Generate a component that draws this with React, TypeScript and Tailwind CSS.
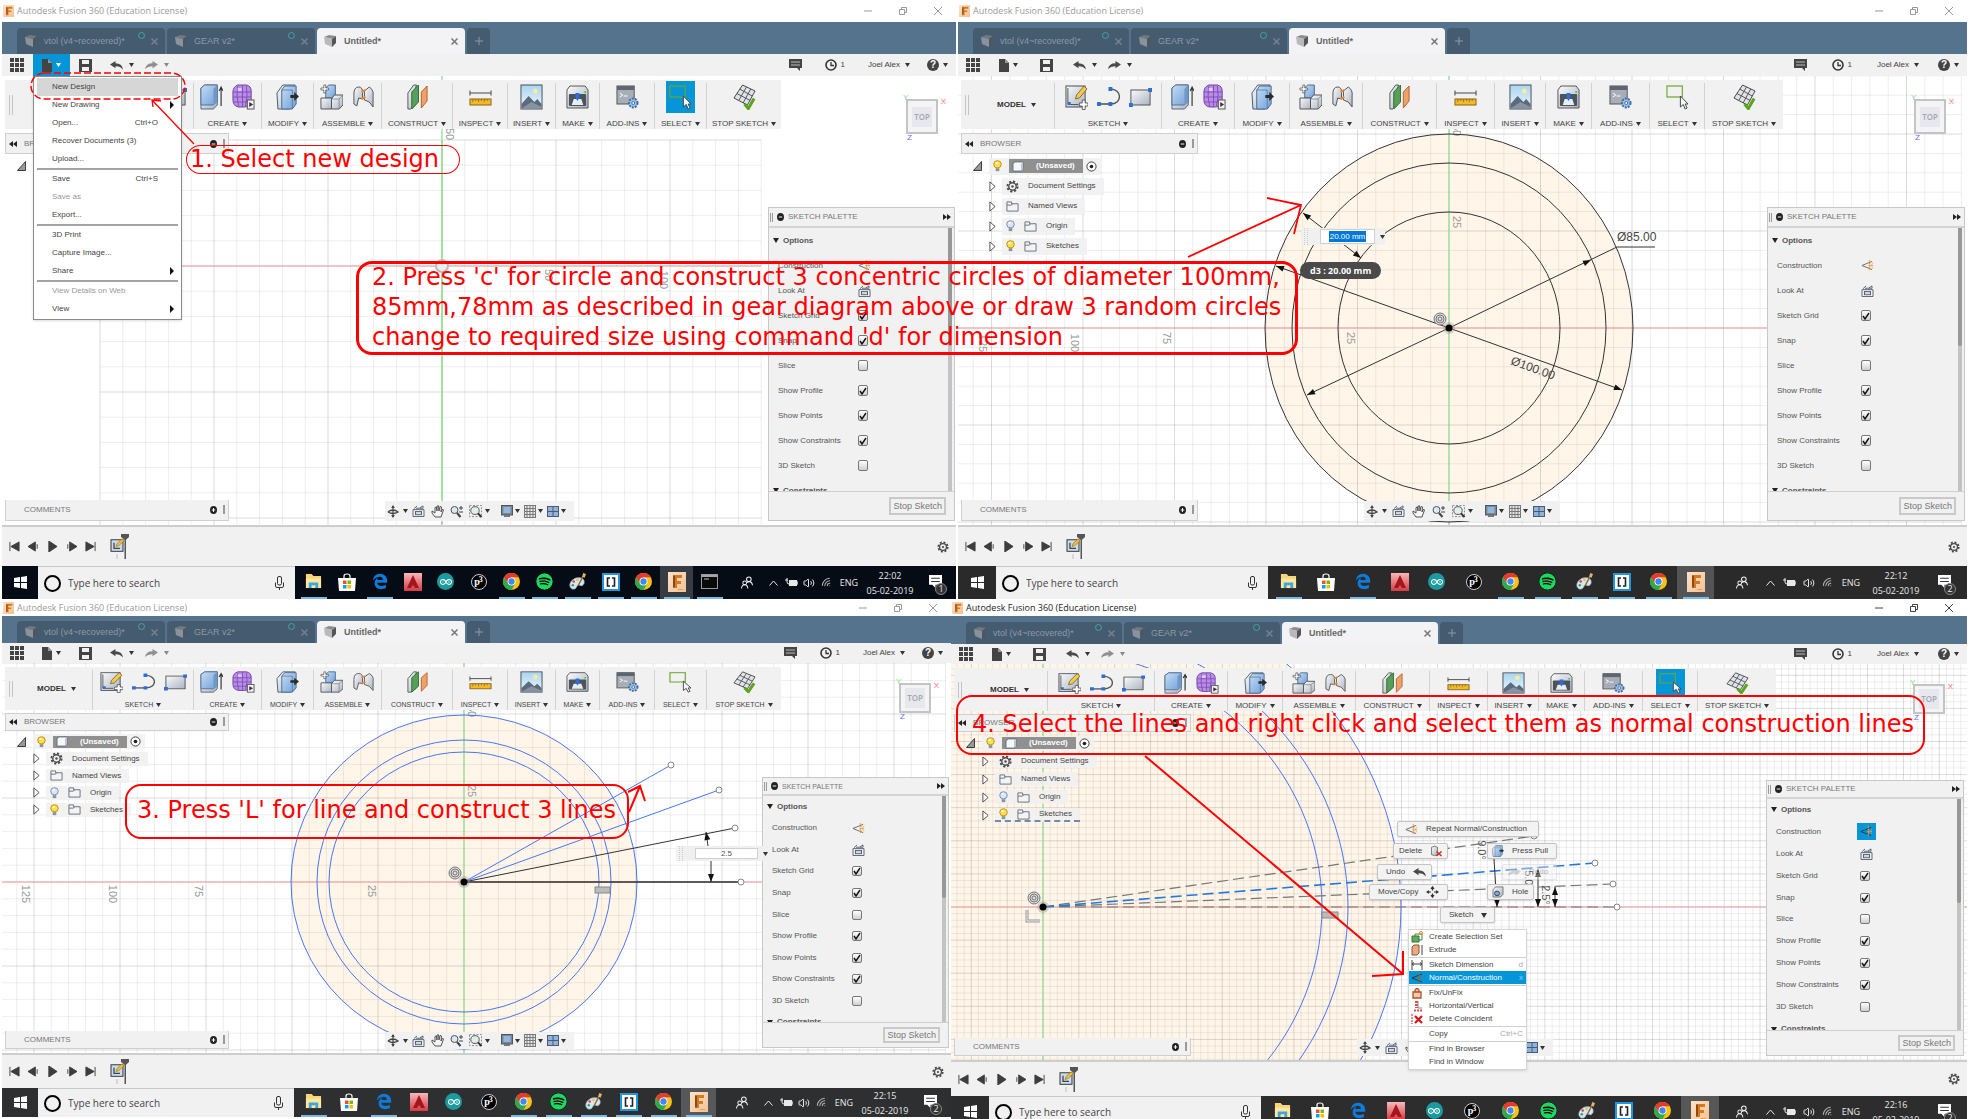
import type { ReactNode } from "react";
import { FaEdgeLegacy, FaSpotify } from "react-icons/fa";
import { SiArduino } from "react-icons/si";
import { LuWifi, LuVolume2 } from "react-icons/lu";

/* ---------- drawing helpers ---------- */

function Pic({ box, className, children }: { box: string; className: string; children: ReactNode }) {
  return (
    <svg viewBox={box} preserveAspectRatio="none" className={`block shrink-0 ${className}`} fill="none" aria-hidden="true">
      {children}
    </svg>
  );
}

function Caret({ light, faint }: { light?: boolean; faint?: boolean }) {
  return (
    <Pic box="0 0 5 4" className="h-1 w-[5px]">
      <path d="M0 0H5L2.500 4Z" fill={light ? "#fff" : faint ? "#888" : "#333"} />
    </Pic>
  );
}

function SharedDefs() {
  return (
    <svg className="absolute h-0 w-0" aria-hidden="true">
      <defs>
        <linearGradient id="steel" x1="0" y1="0" x2="1" y2="1">
          <stop offset="0" stopColor="#fafbfc" />
          <stop offset="1" stopColor="#aab4c2" />
        </linearGradient>
        <linearGradient id="blue" x1="0" y1="0" x2="1" y2="1">
          <stop offset="0" stopColor="#c6ddf6" />
          <stop offset="1" stopColor="#6fa0d8" />
        </linearGradient>
        <linearGradient id="sky" x1="0" y1="0" x2="0" y2="1">
          <stop offset="0" stopColor="#a8d4f0" />
          <stop offset="1" stopColor="#eef7fb" />
        </linearGradient>
        <linearGradient id="acad" x1="0" y1="0" x2="0" y2="1">
          <stop offset="0" stopColor="#f6b9b9" />
          <stop offset="1" stopColor="#d63a42" />
        </linearGradient>
        <linearGradient id="fus" x1="0" y1="0" x2="1" y2="1">
          <stop offset="0" stopColor="#fbe3cb" />
          <stop offset="1" stopColor="#f3c193" />
        </linearGradient>
      </defs>
    </svg>
  );
}

/* ---------- ribbon icons ---------- */

const toolPics: Record<string, ReactNode> = {
  sketch: (
    <>
      <rect x="1" y="2" width="20" height="21" fill="url(#steel)" stroke="#4a4f57" />
      <path d="M3 4V20.500H14" stroke="#555" />
      <rect x="3" y="18" width="3" height="3" fill="#2d6fd2" />
      <path d="M11 15 12 11 20 2 23 5 15 14Z" fill="#f7c948" stroke="#6a5420" strokeWidth=".8" />
      <path d="M18 16h3v3h3v3h-3v3.500h-3V22h-3v-3h3Z" fill="#fff" stroke="#444" strokeWidth=".8" />
    </>
  ),
  line: (
    <>
      <path d="M2 20H14" stroke="#555" strokeWidth="1.600" />
      <path d="M14 20C27 20 26 5 14 5" stroke="#555" strokeWidth="1.400" />
      <path d="M0 18h4v4H0ZM12 18h4v4h-4ZM12 3h4v4h-4Z" fill="#2d6fd2" />
    </>
  ),
  rect: (
    <>
      <rect x="2" y="6" width="20" height="15" fill="url(#steel)" stroke="#555" />
      <path d="M20 4h4v4h-4ZM0 19h4v4H0Z" fill="#2d6fd2" />
    </>
  ),
  extrude: (
    <>
      <path d="M1 4 5 1H18V21L14 25H1Z" fill="url(#steel)" stroke="#4b5a6c" strokeWidth=".9" />
      <path d="M1 4 5 1H18V17L14 21H1Z" fill="url(#blue)" stroke="#4b6a8c" strokeWidth=".9" />
      <path d="M14 5 18 1V17L14 21Z" fill="#6f98c8" />
      <path d="M22 22V4M20 7 22 3 24 7" stroke="#333" strokeWidth="1.200" />
    </>
  ),
  form: (
    <>
      <path d="M6 1H15Q20 2 20 7V17Q19 23 13 23H7Q1 22 1 16V8Q1 3 6 1Z" fill="#b98ce6" stroke="#6d3fa0" />
      <path d="M1 8H20M1 13H20M2 18H19M6 2Q4 12 7 23M11 1V23M15 2Q17 12 14 22" stroke="#7b4bb4" strokeWidth=".9" />
      <path d="M6 4h4v3H6Z" fill="#e0c8f8" />
      <rect x="16" y="16" width="7" height="9" fill="#f1f1f1" stroke="#555" />
      <path d="M18 18 22 20.500 18 23Z" fill="#333" />
    </>
  ),
  press: (
    <>
      <path d="M1 9 7 1H20L17 5V24L14 25H2Z" fill="url(#steel)" stroke="#4b5a6c" />
      <path d="M6 6 9 2H21V20L17 25H6Z" fill="url(#blue)" stroke="#4b6a8c" />
      <path d="M6 6H17V25" stroke="#4b6a8c" strokeWidth=".7" />
      <path d="M15 11h4V8l5 4.500-5 4.500v-3h-4Z" fill="#2b2b2b" />
    </>
  ),
  assemble: (
    <>
      <path d="M6 4 9 1H16V14H6Z" fill="url(#blue)" stroke="#4b6a8c" />
      <path d="M1 14H12V25H1Z" fill="url(#steel)" stroke="#555" />
      <path d="M12 15 15 11H24V21L20 25H12Z" fill="url(#steel)" stroke="#555" />
      <path d="M12 15H20V25M20 15 24 11" stroke="#777" strokeWidth=".7" />
      <path d="M4 1h2v3h3v2H6v3H4V6H1V4h3Z" fill="#fff" stroke="#444" strokeWidth=".7" />
    </>
  ),
  joint: (
    <>
      <path d="M2 20V10Q2 3 7 3 11 3 11 8V15L7 14 5 22Z" fill="url(#steel)" stroke="#555" />
      <path d="M13 16V7L18 3Q23 6 22 12V23L18 18Z" fill="url(#steel)" stroke="#555" />
      <path d="M10 8 14 6M10 15 14 13" stroke="#e8873a" strokeWidth="2" />
    </>
  ),
  construct: (
    <>
      <path d="M2 9 8 1H11L10 4V21L5 25H2Z" fill="url(#steel)" stroke="#555" />
      <path d="M6 8 13 1V18L6 25Z" fill="#57a05a" stroke="#2f6a34" />
      <path d="M16 8 22 2V17L16 24Z" fill="#f0a06a" stroke="#b5622c" />
    </>
  ),
  inspect: (
    <>
      <path d="M1 9H23M1 6.500V11.500M23 6.500V11.500" stroke="#444" />
      <rect x="1" y="15" width="22" height="6" fill="#f2b92c" stroke="#8a6512" />
      <path d="M4 15v3M7 15v2M10 15v3M13 15v2M16 15v3M19 15v2" stroke="#8a6512" strokeWidth=".8" />
    </>
  ),
  insert: (
    <>
      <rect x="1" y="1" width="22" height="24" fill="url(#sky)" stroke="#4a4f57" />
      <circle cx="16" cy="7" r="2.500" fill="#ffe9a0" />
      <path d="M1.500 20 9 12 15 18 18 15 22.500 20V24.500H1.500Z" fill="#5b6b7d" />
      <path d="M1.500 24.500 12 18 22.500 23V24.500Z" fill="#8593a3" />
    </>
  ),
  make: (
    <>
      <path d="M4 2H20L23 6V24H1V6Z" fill="url(#steel)" stroke="#555" />
      <rect x="3" y="10" width="18" height="12" rx="1" fill="#4b535e" />
      <path d="M6 21 8 15H16L18 21Z" fill="#e8edf2" />
      <path d="M10 9h4v5l-2 3-2-3Z" fill="#2d6fd2" />
      <circle cx="20" cy="8" r="1" fill="#3c3" />
    </>
  ),
  addins: (
    <>
      <rect x="1" y="2" width="18" height="18" fill="#a7aeb8" stroke="#555" />
      <rect x="1" y="2" width="18" height="4" fill="#5d6672" />
      <path d="M4 9 7 11 4 13M8 12h4" stroke="#fff" />
      <circle cx="18" cy="19" r="4.500" fill="#9bbfe4" stroke="#3f6da3" strokeWidth="2" strokeDasharray="2 1.200" />
      <circle cx="18" cy="19" r="1.500" fill="#fff" stroke="#3f6da3" />
    </>
  ),
  select: (
    <>
      <rect x="1" y="2" width="16" height="11" stroke="#6ca62c" strokeWidth="1.200" />
      <path d="M15 12V23L18 20.500 20 25 22 24 20 20H23Z" fill="#f4f7fb" stroke="#444" />
    </>
  ),
  stop: (
    <>
      <path d="M10 1 23 7 15 21 1 14Z" fill="#dfe3ea" stroke="#444" />
      <path d="M7 5 20 12M4 9.500 18 16.500M14 3 6 16.500M18.500 5 10.500 19" stroke="#555" />
      <path d="M12 20 16 24.500 22 14.500" stroke="#5aa51f" strokeWidth="3.200" />
    </>
  ),
  remove: (
    <>
      <path d="M3 5Q9 0 15 5V21Q9 25 3 21Z" fill="url(#steel)" stroke="#555" strokeWidth="1.500" />
      <path d="M13 14 23 24M23 14 13 24" stroke="#d0301c" strokeWidth="3" />
    </>
  ),
  hole: (
    <>
      <path d="M2 8 7 2H22V18L17 24H2Z" fill="url(#steel)" stroke="#555" strokeWidth="1.500" />
      <circle cx="10" cy="16" r="5" fill="#7fa8d8" stroke="#33475e" strokeWidth="2" />
    </>
  ),
};

interface Tool {
  name: string;
  pics: string[];
  slim: string;
  broad: string;
}

const tools: Tool[] = [
  { name: "SKETCH", pics: ["sketch", "line", "rect"], slim: "w-[101px]", broad: "w-[107px]" },
  { name: "CREATE", pics: ["extrude", "form"], slim: "w-[68px]", broad: "w-[73px]" },
  { name: "MODIFY", pics: ["press"], slim: "w-[52px]", broad: "w-[55px]" },
  { name: "ASSEMBLE", pics: ["assemble", "joint"], slim: "w-[68px]", broad: "w-[73px]" },
  { name: "CONSTRUCT", pics: ["construct"], slim: "w-[71px]", broad: "w-[74px]" },
  { name: "INSPECT", pics: ["inspect"], slim: "w-[55px]", broad: "w-[58px]" },
  { name: "INSERT", pics: ["insert"], slim: "w-[48px]", broad: "w-[51px]" },
  { name: "MAKE", pics: ["make"], slim: "w-[44px]", broad: "w-[46px]" },
  { name: "ADD-INS", pics: ["addins"], slim: "w-[55px]", broad: "w-[58px]" },
  { name: "SELECT", pics: ["select"], slim: "w-[52px]", broad: "w-[55px]" },
  { name: "STOP SKETCH", pics: ["stop"], slim: "w-[75px]", broad: "w-[79px]" },
];

/* ---------- small icons ---------- */

function FusionLogo() {
  return (
    <Pic box="0 0 20 22" className="h-3 w-[11px]">
      <rect width="20" height="22" fill="url(#fus)" />
      <path d="M6 3H17V7H10V10H15V13H10V19H6Z" fill="#d9781e" />
      <path d="M6 3 8 5V17L6 19Z" fill="#8a4a12" />
    </Pic>
  );
}

function DocCube() {
  return (
    <Pic box="0 0 12 12" className="h-3 w-3">
      <path d="M0 2 5 0 12 1 8 4Z" fill="#8d8d8d" />
      <path d="M0 2 8 4V12L1 9Z" fill="#b9b9b9" />
      <path d="M8 4 12 1V8L8 12Z" fill="#555" />
    </Pic>
  );
}

function Bulb({ on }: { on: boolean }) {
  return (
    <Pic box="0 0 10 14" className="h-3 w-[9px]">
      <circle cx="5" cy="5" r="4.200" fill={on ? "#ffe04a" : "#d7e6fb"} stroke={on ? "#b98a00" : "#6f86ad"} />
      <path d="M3 9.500H7V13H3Z" fill="#8d939b" />
      <circle cx="4" cy="3.500" r="1.300" fill="#fff" />
    </Pic>
  );
}

function Folder() {
  return (
    <Pic box="0 0 14 12" className="h-[11px] w-[13px]">
      <path d="M1 1H6V3H13V11H1Z" fill="#f3f4f6" stroke="#666d76" />
      <path d="M1 4.500H6L7 3" stroke="#666d76" />
    </Pic>
  );
}

function Gear({ className }: { className: string }) {
  return (
    <Pic box="0 0 14 14" className={className}>
      <circle cx="7" cy="7" r="5.500" stroke="#4a4a4a" strokeWidth="2" strokeDasharray="2.300 2" />
      <circle cx="7" cy="7" r="4" stroke="#4a4a4a" strokeWidth="1.500" />
      <circle cx="7" cy="7" r="1.300" fill="#4a4a4a" />
    </Pic>
  );
}

function Dot({ plus }: { plus?: boolean }) {
  return (
    <Pic box="0 0 8 8" className="h-2 w-[7px]">
      <circle cx="4" cy="4" r="4" fill="#222" />
      <path d={plus ? "M2 4H6M4 2V6" : "M2 4H6"} stroke="#fff" />
    </Pic>
  );
}

function Grip() {
  return <span className="h-[9px] w-[3px] border-x border-[#9a9a9a]" />;
}

function Rewind({ flip }: { flip?: boolean }) {
  return (
    <Pic box="0 0 8 6" className="h-[6px] w-2">
      <path d={flip ? "M0 0 4 3 0 6ZM4 0 8 3 4 6Z" : "M8 0 4 3 8 6ZM4 0 0 3 4 6Z"} fill="#222" />
    </Pic>
  );
}

function NormalConstruction({ dark }: { dark?: boolean }) {
  return (
    <Pic box="0 0 14 12" className="h-[11px] w-[13px]">
      <path d="M12 1.500 1 6 12 10.500" stroke={dark ? "#333" : "#666"} />
      <path d="M9 0V12M8 6H14M9 3 13 9M9 9 13 3" stroke="#eb9a34" strokeDasharray="2 1" />
    </Pic>
  );
}

function LookAt() {
  return (
    <Pic box="0 0 13 13" className="h-3 w-[13px]">
      <path d="M1 5H12V12.500H1Z" fill="#eef1f5" stroke="#5a6470" />
      <rect x="3.500" y="7" width="6" height="3.500" fill="#cfd6df" stroke="#5a6470" />
      <path d="M2 4 5 1M4 3.500H11V1L8 3" stroke="#5a6470" />
    </Pic>
  );
}

function UndoArrow({ flip, faint }: { flip?: boolean; faint?: boolean }) {
  return (
    <Pic box="0 0 13 10" className="h-[9px] w-[13px]">
      <path
        d={flip ? "M13 4 7.500 0V2.500Q1 2.500 0 9 3 5.500 7.500 5.800V8Z" : "M0 4 5.500 0V2.500Q12 2.500 13 9.500 10 5.500 5.500 5.800V8Z"}
        fill={faint ? "#8f8f8f" : "#4a4a4a"}
      />
    </Pic>
  );
}

/* ---------- window parts ---------- */

interface Shape {
  broad: boolean;
  tall: boolean;
}

function TitleBar({ strong, height }: { strong?: boolean; height: string }) {
  const ink = strong ? "text-[#222]" : "text-[#9a9a9a]";
  const stroke = strong ? "#444" : "#999";
  return (
    <header className={`flex items-center justify-between bg-white pl-px pr-[14px] ${height} ${ink}`}>
      <div className="flex items-center gap-[3px]">
        <FusionLogo />
        <h2 className="font-['Open_Sans',sans-serif] text-[9px] leading-3 whitespace-nowrap">Autodesk Fusion 360 (Education License)</h2>
      </div>
      <div className="flex gap-[27px]">
        <button aria-label="Minimize">
          <Pic box="0 0 8 8" className="h-2 w-2"><path d="M0 4H8" stroke={stroke} /></Pic>
        </button>
        <button aria-label="Restore">
          <Pic box="0 0 8 8" className="h-2 w-2"><path d="M.5 2.500H5.500V7.500H.5ZM2.500 2.500V.5H7.500V5.500H5.500" stroke={stroke} /></Pic>
        </button>
        <button aria-label="Close">
          <Pic box="0 0 8 8" className="h-2 w-2"><path d="M0 0 8 8M8 0 0 8" stroke={stroke} /></Pic>
        </button>
      </div>
    </header>
  );
}

function TabStrip({ broad, tall, height }: Shape & { height: string }) {
  const width = broad ? "w-[156px]" : "w-[148px]";
  return (
    <nav className={`flex items-end bg-[#56738d] pl-[15px] text-[9px] ${height}`} aria-label="Documents">
      <div className={`flex flex-1 items-end gap-[2px] ${tall ? "h-[26px]" : "h-[22px]"}`}>
        {["vtol (v4~recovered)*", "GEAR v2*"].map((name) => (
          <div key={name} className={`flex h-full items-center rounded-t-sm bg-[#455b70] pr-[7px] pl-2 text-[#8c99a6] ${width}`}>
            <span className="opacity-60"><DocCube /></span>
            <button className="ml-[7px] flex-1 text-left whitespace-nowrap">{name}</button>
            <span className="mb-3 h-[7px] w-[7px] rounded-full border border-[#3fa79c]" />
            <button className="ml-[6px] text-[#74828f]" aria-label={`Close ${name}`}>
              <Pic box="0 0 7 7" className="h-[7px] w-[7px]"><path d="M.5.5 6.500 6.500M6.500.5.5 6.500" stroke="currentColor" strokeWidth="1.500" /></Pic>
            </button>
          </div>
        ))}
        <div className={`flex h-full items-center rounded-t-sm bg-[#f3f3f5] pr-[7px] pl-[7px] text-[#666] ${width}`}>
          <DocCube />
          <button className="ml-2 flex-1 text-left font-bold">Untitled*</button>
          <button className="text-[#777]" aria-label="Close Untitled">
            <Pic box="0 0 7 7" className="h-[7px] w-[7px]"><path d="M.5.5 6.500 6.500M6.500.5.5 6.500" stroke="currentColor" strokeWidth="1.500" /></Pic>
          </button>
        </div>
        <button className="flex h-full w-[23px] items-center justify-center rounded-t-sm bg-[#455b70]" aria-label="New tab">
          <Pic box="0 0 8 8" className="h-2 w-2"><path d="M4 0V8M0 4H8" stroke="#8c99a6" /></Pic>
        </button>
      </div>
    </nav>
  );
}

function QuickBar({ broad, height, fileOpen, redo }: { broad: boolean; height: string; fileOpen?: boolean; redo?: boolean }) {
  return (
    <div className={`flex items-center justify-between bg-[#f1f1f1] pr-2 pl-2 ${height}`}>
      <div className="flex h-full items-center">
        <button aria-label="Data panel">
          <Pic box="0 0 14 14" className="h-[14px] w-[14px]">
            <path d="M0 0h4v4H0ZM5 0h4v4H5ZM10 0h4v4h-4ZM0 5h4v4H0ZM5 5h4v4H5ZM10 5h4v4h-4ZM0 10h4v4H0ZM5 10h4v4H5ZM10 10h4v4h-4Z" fill="#444" />
          </Pic>
        </button>
        <button
          aria-label="File"
          className={`ml-[9px] flex h-full w-[37px] items-center gap-1 ${broad ? "pl-[10px]" : "pl-[9px]"} ${fileOpen ? "bg-[#0696d7]" : ""}`}
        >
          <Pic box="0 0 10 13" className="h-[13px] w-[10px]">
            <path d="M0 0H6L10 4V13H0Z" fill="#444" />
            <path d="M6 0V4H10Z" fill="#999" />
          </Pic>
          <Caret light={fileOpen} />
        </button>
        <button aria-label="Save" className={broad ? "ml-[14px]" : "ml-[9px]"}>
          <Pic box="0 0 13 13" className="h-[13px] w-[13px]">
            <path d="M0 0H13V13H0ZM3 1V5H10V1ZM3 8V12H10V8Z" fill="#444" fillRule="evenodd" />
          </Pic>
        </button>
        <button aria-label="Undo" className={`flex items-center gap-[6px] ${broad ? "ml-5" : "ml-[18px]"}`}>
          <UndoArrow />
          <Caret />
        </button>
        <button aria-label="Redo" className="ml-[11px] flex items-center gap-[6px]">
          <UndoArrow flip faint={!redo} />
          <Caret faint={!redo} />
        </button>
      </div>
      <div className={`flex items-center text-[#444] ${broad ? "gap-[25px]" : "gap-[23px]"}`}>
        <button aria-label="Comments">
          <Pic box="0 0 13 12" className="h-3 w-[13px]">
            <path d="M0 0H13V9H11V12L8 9H0Z" fill="#444" />
            <path d="M2 3H11M2 6H11" stroke="#bbb" />
          </Pic>
        </button>
        <button className="flex items-center gap-1" aria-label="Job status">
          <Pic box="0 0 12 12" className="h-3 w-3">
            <circle cx="6" cy="6" r="5" stroke="#333" strokeWidth="1.600" />
            <path d="M6 3V6.500H9" stroke="#333" strokeWidth="1.300" />
          </Pic>
          1
        </button>
        <button className="flex items-center gap-[5px] whitespace-nowrap">Joel Alex <Caret /></button>
        <button className="-ml-[6px] flex items-center gap-1" aria-label="Help">
          <span className="flex h-3 w-3 items-center justify-center rounded-full bg-[#444] text-[10px] font-bold text-white">?</span>
          <Caret />
        </button>
      </div>
    </div>
  );
}

function Ribbon({ broad, tall, selectOn }: Shape & { selectOn?: boolean }) {
  const label = tall || broad ? "text-[8px]" : "text-[7px]";
  const pic = tall ? "h-[26px]" : "h-[22px]";
  return (
    <div className={`relative flex w-fit items-end bg-[#f1f1f1] ${tall ? "h-[49px]" : "h-[43px]"} ${label}`}>
      <button className={`flex h-full items-center pl-1 text-[8px] font-bold text-[#333] ${broad ? "w-[93px]" : "w-[87px]"}`}>
        <span className={`w-1 border-x border-[#c4c4c4] ${tall ? "h-5" : "h-4"}`} />
        <span className={`mr-[5px] ${broad ? "ml-[28px]" : "ml-6"}`}>MODEL</span>
        <Caret />
      </button>
      {tools.map((tool) => (
        <button
          key={tool.name}
          className={`flex flex-col items-center justify-end border-l border-[#d2d2d2] whitespace-nowrap text-[#444] ${tall ? "h-[46px]" : "h-[40px]"} ${broad ? tool.broad : tool.slim}`}
        >
          <span className={`flex gap-[9px] ${tall ? "mb-2" : "mb-[6px]"}`}>
            {tool.pics.map((name) => (
              <span key={name} className={selectOn && name === "select" ? "-my-[3px] bg-[#0696d7] px-[3px] py-[3px]" : ""}>
                <Pic box="0 0 24 26" className={`w-[23px] ${pic}`}>{toolPics[name]}</Pic>
              </span>
            ))}
          </span>
          <span className="flex items-center gap-[3px] leading-[11px]">
            {tool.name}
            <Caret />
          </span>
        </button>
      ))}
    </div>
  );
}

function treeRow({ broad, tall }: Shape) {
  return tall ? "h-5" : broad ? "h-[18px]" : "h-[17px]";
}

function TreeItem({ name, icon, shape, marked }: { name: string; icon: ReactNode; shape: Shape; marked?: boolean }) {
  return (
    <li className={`flex items-center pl-[28px] ${treeRow(shape)}`}>
      <button aria-label={`Expand ${name}`}>
        <Pic box="0 0 8 12" className="h-[11px] w-[7px]"><path d="M1 1 7 6 1 11Z" stroke="#444" fill="#fafafa" /></Pic>
      </button>
      <span
        className={`ml-[6px] flex items-center bg-[#f1f1f1]/90 pr-2 pl-1 whitespace-nowrap ${shape.tall ? "h-[17px]" : "h-[14px]"} ${marked ? "border-b-2 border-dashed border-[#7189ac]" : ""}`}
      >
        {icon}
        <span className="ml-[9px]">{name}</span>
      </span>
    </li>
  );
}

function Browser({ broad, tall, marked }: Shape & { marked?: boolean }) {
  const shape = { broad, tall };
  return (
    <section className={tall ? "mt-1" : "mt-[3px]"}>
      <h3
        className={`flex items-center border border-[#cfcfcf] bg-[#f1f1f1] px-[3px] text-[8px] font-normal text-[#777] ${tall ? "h-[21px]" : "h-[18px]"} ${broad ? "w-[237px]" : "w-[224px]"}`}
      >
        <Rewind />
        <span className="ml-[7px] flex-1">BROWSER</span>
        <Dot />
        <span className="ml-[6px]"><Grip /></span>
      </h3>
      <ul className="mt-[2px]">
        <li className={`flex items-center pl-[12px] ${treeRow(shape)}`}>
          <Pic box="0 0 10 10" className="h-[10px] w-[9px]"><path d="M9.500.5V9.500H.5Z" fill="#999" stroke="#333" /></Pic>
          <span className={`ml-[7px] flex items-center bg-[#f1f1f1]/90 pr-1 pl-1 ${tall ? "h-[17px]" : "h-[15px]"}`}>
            <Bulb on />
            <span className={`ml-[7px] flex items-center bg-[#909090] pr-2 pl-[3px] font-bold text-white ${tall ? "h-[14px]" : "h-3"}`}>
              <Pic box="0 0 12 12" className="mr-3 h-[11px] w-3">
                <path d="M1 3 3 1H11V9L9 11H1Z" fill="#f5f7fa" stroke="#69727e" />
                <path d="M9 3 11 1V9L9 11Z" fill="#bcc6d2" />
              </Pic>
              (Unsaved)
            </span>
            <Pic box="0 0 12 12" className="ml-[3px] h-[11px] w-[11px]">
              <circle cx="6" cy="6" r="5" stroke="#333" fill="#fff" />
              <circle cx="6" cy="6" r="2" fill="#222" />
            </Pic>
          </span>
        </li>
        <TreeItem shape={shape} name="Document Settings" icon={<Gear className="h-[13px] w-[13px]" />} />
        <TreeItem shape={shape} name="Named Views" icon={<Folder />} />
        <TreeItem shape={shape} name="Origin" icon={<span className="flex items-center gap-[9px]"><Bulb on={false} /><Folder /></span>} />
        <TreeItem shape={shape} name="Sketches" marked={marked} icon={<span className="flex items-center gap-[9px]"><Bulb on /><Folder /></span>} />
      </ul>
    </section>
  );
}

function Comments({ broad, tall }: Shape) {
  return (
    <div
      className={`mt-auto flex items-center border border-t-0 border-[#cfcfcf] bg-[#f1f1f1] pr-[3px] pl-[18px] text-[8px] text-[#777] ${tall ? "h-[21px]" : "h-[18px]"} ${broad ? "w-[237px]" : "w-[224px]"}`}
    >
      <span className="flex-1">COMMENTS</span>
      <Dot plus />
      <span className="ml-[6px]"><Grip /></span>
    </div>
  );
}

function NavBar({ broad, tall }: Shape) {
  return (
    <div className={`flex items-center bg-[#f1f1f1] pr-2 pl-[2px] ${tall ? "h-5" : "h-[17px]"} ${broad ? "ml-[166px] gap-[5px]" : "ml-[156px] gap-1"}`}>
      <button aria-label="Orbit" className="flex items-center gap-1">
        <Pic box="0 0 13 13" className="h-[13px] w-3">
          <path d="M6.500 1V12M1 7Q6.500 3 12 7 6.500 10 1 7" stroke="#444" strokeWidth="1.300" />
          <path d="M4.500 3 6.500 0 8.500 3ZM4.500 10H8.500L6.500 13Z" fill="#444" />
        </Pic>
        <Caret />
      </button>
      <button aria-label="Look at"><LookAt /></button>
      <button aria-label="Pan" className="ml-[2px]">
        <Pic box="0 0 13 13" className="h-[13px] w-[13px]">
          <path d="M4 12 1 8V6L4 8V2.500L5.500 2 6 6V1L7.500.800 8 6 9 1.500 10.500 2 10 7 11.500 4 12.500 5 10 12Z" fill="#f5f5f5" stroke="#444" strokeWidth=".9" />
        </Pic>
      </button>
      <button aria-label="Zoom" className="ml-[2px]">
        <Pic box="0 0 13 13" className="h-[13px] w-[13px]">
          <circle cx="4.500" cy="5" r="3.500" stroke="#555" fill="#dbe8f4" />
          <path d="M7 8 10.500 12" stroke="#444" strokeWidth="2" />
          <path d="M9 3H13M11 1V5M9 7H13" stroke="#444" />
        </Pic>
      </button>
      <button aria-label="Fit" className="ml-[2px] flex items-center gap-[2px]">
        <Pic box="0 0 14 14" className="h-[13px] w-[14px]">
          <rect x=".5" y=".5" width="12" height="12" stroke="#888" strokeDasharray="2 1.500" />
          <circle cx="6" cy="6" r="4.200" stroke="#555" fill="#dff0ea" />
          <path d="M9 9 12.500 13" stroke="#333" strokeWidth="2" />
        </Pic>
        <Caret />
      </button>
      <button aria-label="Display settings" className="ml-[7px] flex items-center gap-[2px]">
        <Pic box="0 0 12 13" className="h-[13px] w-3">
          <rect x=".5" y=".5" width="11" height="9.500" fill="#7d8794" stroke="#555" />
          <rect x="2.500" y="2" width="7" height="6" fill="#8db8e6" />
          <path d="M3 12H9V10H3Z" fill="#777" />
        </Pic>
        <Caret />
      </button>
      <button aria-label="Grid and snaps" className="flex items-center gap-[2px]">
        <Pic box="0 0 12 13" className="h-[13px] w-3">
          <rect x=".5" y=".5" width="11" height="12" fill="#e9e9e9" stroke="#777" />
          <path d="M3 0V13M6 0V13M9 0V13M0 3.500H12M0 6.500H12M0 9.500H12" stroke="#777" />
        </Pic>
        <Caret />
      </button>
      <button aria-label="Viewports" className="flex items-center gap-[2px]">
        <Pic box="0 0 12 11" className="h-[11px] w-3">
          <rect x=".5" y=".5" width="11" height="10" fill="#8fb3dc" stroke="#4b5a70" />
          <path d="M6 0V11M0 5.500H12" stroke="#4b5a70" />
        </Pic>
        <Caret />
      </button>
    </div>
  );
}

const options: [string, boolean][] = [
  ["Sketch Grid", true],
  ["Snap", true],
  ["Slice", false],
  ["Show Profile", true],
  ["Show Points", true],
  ["Show Constraints", true],
  ["3D Sketch", false],
];

function Palette({ id, broad, tall, active, bottom }: Shape & { id: string; active?: boolean; bottom: string }) {
  const row = "flex flex-1 items-center";
  const name = broad ? "w-[84px]" : "w-20";
  return (
    <section className={`ml-auto flex flex-col self-end border border-[#c8c8c8] bg-[#f1f1f1] ${bottom} ${broad ? "w-[198px]" : "w-[187px]"}`}>
      <h3 className={`flex items-center border-b-2 border-[#d4d4d4] pr-[3px] pl-px font-normal text-[#777] ${tall ? "h-5 text-[8px]" : broad ? "h-[18px] text-[8px]" : "h-[18px] text-[7px]"}`}>
        <Grip />
        <span className="mx-[4px]"><Dot /></span>
        <span className="flex-1">SKETCH PALETTE</span>
        <Rewind flip />
      </h3>
      <div className={`flex items-start overflow-hidden ${tall ? "h-[263px]" : broad ? "h-[231px]" : "h-[226px]"}`}>
        <div className={`flex flex-1 flex-col text-[#555] ${tall ? "h-[275px]" : broad ? "h-[241px]" : "h-[237px]"}`}>
          <div className={`gap-1 pl-1 font-bold ${row}`}>
            <Pic box="0 0 6 5" className="h-[5px] w-[6px]"><path d="M0 0H6L3 5Z" fill="#222" /></Pic>
            Options
          </div>
          <div className={`pl-[9px] ${row}`}>
            <span className={name}>Construction</span>
            <button aria-label="Construction" className={active ? "-m-[3px] bg-[#0696d7] p-[3px]" : ""}><NormalConstruction dark={active} /></button>
          </div>
          <div className={`pl-[9px] ${row}`}>
            <span className={name}>Look At</span>
            <button aria-label="Look At"><LookAt /></button>
          </div>
          {options.map(([label, on]) => (
            <div key={label} className={`pl-[9px] ${row}`}>
              <label htmlFor={`${id}-${label}`} className={`whitespace-nowrap ${name}`}>{label}</label>
              <span className="grid items-center justify-items-center">
                <input
                  id={`${id}-${label}`}
                  type="checkbox"
                  defaultChecked={on}
                  className={`peer col-start-1 row-start-1 w-[10px] appearance-none rounded-xs border border-[#777] bg-linear-to-b from-white to-[#cfcfcf] ${tall ? "h-[11px]" : "h-[10px]"}`}
                />
                <svg viewBox="0 0 8 8" className="pointer-events-none invisible col-start-1 row-start-1 h-2 w-2 peer-checked:visible" fill="none" aria-hidden="true">
                  <path d="M1 4 3 7 7 1" stroke="#111" strokeWidth="1.400" />
                </svg>
              </span>
            </div>
          ))}
          <div className={`gap-1 pl-1 font-bold ${row}`}>
            <Pic box="0 0 6 5" className="h-[5px] w-[6px]"><path d="M0 0H6L3 5Z" fill="#222" /></Pic>
            Constraints
          </div>
        </div>
        <div className="mr-[2px] h-full w-1 bg-[#c3c3c6]">
          <div className="h-[45%] rounded-b-full bg-[#989898]" />
        </div>
      </div>
      <footer className={`flex items-center justify-end border-t border-[#cfcfcf] pr-2 ${tall ? "h-[29px]" : "h-[25px]"}`}>
        <button className={`border-2 border-[#c9c9c9] px-[2px] text-[9px] text-[#777] ${tall ? "leading-[14px]" : "leading-3"}`}>Stop Sketch</button>
      </footer>
    </section>
  );
}

function ViewCube({ tall, place }: { tall: boolean; place: string }) {
  return (
    <div className={`absolute ${place}`}>
      <span className="absolute -top-[5px] -left-[3px] text-[8px] leading-none text-[#7fe07f]">Y</span>
      <span className="absolute -top-[1px] -right-[8px] text-[8px] leading-none text-[#ff7070]">X</span>
      <span className="absolute -bottom-[8px] left-px text-[8px] leading-none text-[#6a6aff]">Z</span>
      <button className={`flex w-8 items-center justify-center border-2 border-[#c4c4c4] bg-[#f4f4f6] ${tall ? "h-[35px]" : "h-[30px]"}`}>
        <span className="bg-[#e6e8ed] px-[2px] py-1 font-['Open_Sans',sans-serif] text-[8px] leading-3 font-semibold text-[#a3a7ad]">TOP</span>
      </button>
    </div>
  );
}

function Timeline({ height }: { height: string }) {
  const keys: [string, string][] = [
    ["Start", "M1 1V11M11 1V11L2 6Z"],
    ["Back", "M8 1V11L0 6ZM10 3.500V8.500"],
    ["Play", "M2 0V12L11 6Z"],
    ["Forward", "M4 1V11L12 6ZM2 3.500V8.500"],
    ["End", "M11 1V11M1 1V11L10 6Z"],
  ];
  return (
    <div className={`flex items-center justify-between border-t-2 border-[#cdcdcd] bg-[#f1f1f1] pr-[7px] pl-[7px] ${height}`}>
      <div className="flex items-center gap-2">
        {keys.map(([name, d]) => (
          <button key={name} aria-label={name}>
            <Pic box="0 0 12 12" className="h-[11px] w-[11px]"><path d={d} fill="#3d3d3d" stroke="#3d3d3d" /></Pic>
          </button>
        ))}
        <Pic box="0 0 20 26" className="ml-[6px] h-[25px] w-5">
          <rect x="1" y="6" width="12" height="12" fill="#c8dcf0" stroke="#333" />
          <path d="M4 9V15H10" stroke="#444" strokeWidth="1.300" />
          <path d="M6 13 7 10 12 5 14 7 9 12Z" fill="#f6bd35" stroke="#8a6512" strokeWidth=".6" />
          <path d="M11 0H19V3L16 6V26H14.500V6L11 3Z" fill="#555" />
          <path d="M7 21V26" stroke="#bbb" />
        </Pic>
      </div>
      <Gear className="h-3 w-3" />
    </div>
  );
}

/* ---------- taskbar ---------- */

function Chrome() {
  return (
    <Pic box="0 0 20 20" className="h-[17px] w-[17px]">
      <circle cx="10" cy="10" r="10" fill="#fbc116" />
      <path d="M1.300 5A10 10 0 0 1 18.700 5H10L5.700 12.500Z" fill="#e33b2e" />
      <path d="M1.300 5A10 10 0 0 0 10 20L14.300 12.500 10 10 5.700 12.500Z" fill="#2da94f" />
      <circle cx="10" cy="10" r="4.700" fill="#fff" />
      <circle cx="10" cy="10" r="3.700" fill="#4285f4" />
    </Pic>
  );
}

const apps: { name: string; open?: boolean; pic: ReactNode }[] = [
  {
    name: "File Explorer",
    open: true,
    pic: (
      <Pic box="0 0 18 16" className="h-[15px] w-[17px]">
        <path d="M1 0H7L9 2H17V15H1Z" fill="#f7d678" />
        <path d="M1 5H17V15H1Z" fill="#fbe7a3" />
        <path d="M4 9H14V15H11V12H7V15H4Z" fill="#3da7dc" />
      </Pic>
    ),
  },
  {
    name: "Store",
    pic: (
      <Pic box="0 0 18 18" className="h-[18px] w-[18px]">
        <path d="M6 5V3Q6 1 9 1 12 1 12 3V5" stroke="#fff" strokeWidth="1.200" />
        <path d="M0 5H18L17 18H1Z" fill="#fff" />
        <path d="M5 7.500H8.500V11H5Z" fill="#f25022" />
        <path d="M9.500 7.500H13V11H9.500Z" fill="#7fba00" />
        <path d="M5 12H8.500V15.500H5Z" fill="#00a4ef" />
        <path d="M9.500 12H13V15.500H9.500Z" fill="#ffb900" />
      </Pic>
    ),
  },
  { name: "Edge", open: true, pic: <FaEdgeLegacy className="h-[17px] w-4 text-[#0f7bd8]" /> },
  {
    name: "AutoCAD",
    pic: (
      <Pic box="0 0 18 18" className="h-[18px] w-[18px]">
        <rect width="18" height="18" fill="url(#acad)" />
        <path d="M9 2 15 15H11L9 12 7 15H3Z" fill="#a3161d" />
      </Pic>
    ),
  },
  {
    name: "Arduino",
    pic: (
      <span className="flex h-[17px] w-[17px] items-center justify-center rounded-full bg-[#1b9aa0]">
        <SiArduino className="h-3 w-3 text-white" />
      </span>
    ),
  },
  {
    name: "Processing",
    pic: (
      <span className="flex h-4 w-4 items-center justify-center rounded-full border border-[#ccc] bg-black font-['Liberation_Serif',serif] text-[10px] leading-none font-bold text-white">
        p<span className="-ml-px mb-1 text-[8px]">3</span>
      </span>
    ),
  },
  { name: "Chrome", open: true, pic: <Chrome /> },
  {
    name: "Spotify",
    open: true,
    pic: <FaSpotify className="h-[17px] w-[17px] rounded-full bg-black text-[#1ed760]" />,
  },
  {
    name: "Paint",
    open: true,
    pic: (
      <Pic box="0 0 18 18" className="h-[17px] w-[17px]">
        <path d="M2 9Q6 4 12 5 17 6 16 11 14 15 11 13 9 12 8 15 7 18 3 17-1 14 2 9Z" fill="#d3e6f5" stroke="#7f9db8" strokeWidth=".6" />
        <circle cx="5" cy="9" r="1.300" fill="#e33b2e" />
        <circle cx="4" cy="13" r="1.300" fill="#2da94f" />
        <circle cx="9" cy="7.500" r="1.300" fill="#fbc116" />
        <path d="M10 13 15 3" stroke="#9a6a3a" strokeWidth="1.600" />
        <path d="M14 4 15 0 18 1 16.500 5Z" fill="#e8b26a" />
      </Pic>
    ),
  },
  {
    name: "Brackets",
    open: true,
    pic: (
      <Pic box="0 0 18 18" className="h-[18px] w-[18px]">
        <rect x="1" y="1" width="16" height="16" fill="#fff" stroke="#2196dc" strokeWidth="2" />
        <path d="M8 5H5.500V13H8M10 5H12.500V13H10" stroke="#222" strokeWidth="1.600" />
      </Pic>
    ),
  },
  { name: "Chrome window 2", open: true, pic: <Chrome /> },
  {
    name: "Fusion 360",
    open: true,
    pic: (
      <Pic box="0 0 18 20" className="h-5 w-[18px]">
        <rect width="18" height="20" fill="url(#fus)" />
        <path d="M6 3H14V6H9V9H13V12H9V16H6Z" fill="#d9781e" />
        <path d="M5 3 7 4V15L5 16Z" fill="#8a4a12" />
        <path d="M10 17.500H15" stroke="#e99b55" />
      </Pic>
    ),
  },
];

const commandPrompt = {
  name: "Command Prompt",
  open: true,
  pic: (
    <Pic box="0 0 17 15" className="h-[15px] w-[17px]">
      <rect x=".5" y=".5" width="16" height="14" fill="#0a0a0a" stroke="#999" />
      <path d="M1 2H16" stroke="#ddd" strokeWidth="1.500" />
      <path d="M3 5H8" stroke="#bbb" />
    </Pic>
  ),
};

interface TaskProps {
  broad: boolean;
  time: string;
  count: string;
  height: string;
  tone: string;
  slot: string;
  search: string;
  prompt?: boolean;
}

function TaskBar({ broad, time, count, height, tone, slot, search, prompt }: TaskProps) {
  const small = broad ? "w-[19px]" : "w-[18px]";
  return (
    <footer className={`flex font-['Open_Sans',sans-serif] text-[9px] text-[#e8e8e8] ${height} ${tone}`}>
      <button aria-label="Start" className={`flex items-center justify-center ${broad ? "w-[38px]" : "w-[36px]"}`}>
        <Pic box="0 0 13 13" className="h-[13px] w-[13px]">
          <path d="M0 2 6 1V6H0ZM7 1 13 0V6H7ZM0 7H6V12L0 11ZM7 7H13V13L7 12Z" fill="#fff" />
        </Pic>
      </button>
      <div className={`flex items-center border-t border-[#c9c9c9] bg-[#f1f1f1] pr-[11px] pl-[6px] ${search}`}>
        <span className="h-[17px] w-[17px] shrink-0 rounded-full border-2 border-black" />
        <input aria-label="Search" placeholder="Type here to search" className="ml-[7px] min-w-0 flex-1 bg-transparent text-[10px] text-black placeholder:text-[#444]" />
        <Pic box="0 0 9 14" className="h-[14px] w-[9px]">
          <rect x="2.500" y=".5" width="4" height="8.500" rx="1.500" stroke="#333" />
          <path d="M.5 6.500V10Q.5 11.500 2 11.500H7Q8.500 11.500 8.500 10V6.500M4.500 11.500V14" stroke="#333" />
        </Pic>
      </div>
      <div className="flex pl-[2px]">
        {(prompt ? [...apps, commandPrompt] : apps).map((app) => (
          <button
            key={app.name}
            aria-label={app.name}
            className={`flex flex-col items-center ${slot} ${app.name === "Fusion 360" ? "bg-white/20" : ""}`}
          >
            <span className="flex flex-1 items-center">{app.pic}</span>
            <span className={`h-[2px] w-[26px] ${app.open ? "bg-[#76b9ed]" : ""}`} />
          </button>
        ))}
      </div>
      <div className="ml-auto flex items-center">
        <span className={`flex justify-center ${broad ? "w-[38px]" : "w-[34px]"}`}>
          <Pic box="0 0 13 14" className="h-[13px] w-3">
            <circle cx="8.500" cy="3.500" r="2.500" stroke="#f0f0f0" strokeWidth="1.100" />
            <circle cx="4" cy="7.500" r="2" stroke="#f0f0f0" strokeWidth="1.100" />
            <path d="M.5 13.500Q1 9.500 4 9.500 7 9.500 7.500 13.500M6.500 7Q8 6 9.500 6.200 12 6.500 12.500 10" stroke="#f0f0f0" strokeWidth="1.100" />
          </Pic>
        </span>
        <span className={`flex justify-center ${small}`}>
          <Pic box="0 0 9 6" className="h-[6px] w-[9px]"><path d="M.5 5.500 4.500 1 8.500 5.500" stroke="#e8e8e8" /></Pic>
        </span>
        <span className={`flex justify-center ${small}`}>
          <Pic box="0 0 13 9" className="h-[9px] w-[13px]"><path d="M4 2H12V8H4Z" fill="#e8e8e8" /><path d="M12 4H13V6H12M0 2H3M2 0V4M2 4Q2 6 4 6" stroke="#e8e8e8" /></Pic>
        </span>
        <span className={`flex justify-center ${small}`}><LuVolume2 className="h-3 w-3" /></span>
        <span className={`flex justify-center ${small}`}><LuWifi className="h-3 w-3 -rotate-45 text-[#b5b5b5]" /></span>
        <span className={`text-center ${broad ? "w-[28px]" : "w-[26px]"}`}>ENG</span>
        <span className={`text-center leading-[15px] whitespace-nowrap ${broad ? "w-[62px]" : "w-[56px]"}`}>
          {time}
          <br />
          05-02-2019
        </span>
        <span className={`flex items-center pl-[11px] ${broad ? "w-[40px]" : "w-[38px]"}`}>
          <Pic box="0 0 12 12" className="mb-[2px] h-[13px] w-[13px]"><path d="M0 0H12V9H6V12L3 9H0Z" fill="#fff" /><path d="M2 3H10M2 6H10" stroke="#333" /></Pic>
          <span className="-ml-[7px] mt-3 flex h-3 w-3 items-center justify-center rounded-full border border-[#888] bg-[#333] text-[9px] leading-none">{count}</span>
        </span>
      </div>
    </footer>
  );
}

/* ---------- sketch scenes ---------- */

interface GridProps {
  dx: number;
  dy: number;
  left: number;
  right: number;
  up: number;
  down: number;
  every?: number;
}

function range(from: number, to: number) {
  return Array.from({ length: to - from + 1 }, (_, i) => from + i);
}

function Grid({ dx, dy, left, right, up, down, every = 5 }: GridProps) {
  const x0 = -left * dx;
  const x1 = right * dx;
  const y0 = -up * dy;
  const y1 = down * dy;
  const v = (i: number) => `M${i * dx} ${y0}V${y1}`;
  const h = (i: number) => `M${x0} ${i * dy}H${x1}`;
  const minor = [...range(-left, right).filter((i) => i % every).map(v), ...range(-up, down).filter((i) => i % every).map(h)];
  const major = [...range(-left, right).filter((i) => i % every === 0).map(v), ...range(-up, down).filter((i) => i % every === 0).map(h)];
  return (
    <>
      <path d={minor.join("")} stroke="#000" strokeOpacity=".07" />
      <path d={major.join("")} stroke="#000" strokeOpacity=".14" />
      <path d={`M${x0} 0H${x1}`} stroke="#f0a0a0" strokeWidth="1.200" />
      <path d={`M0 ${y0}V${y1}`} stroke="#8fe08f" strokeWidth="1.200" />
    </>
  );
}

function AxisLabels({ items }: { items: [number, number, string][] }) {
  return (
    <g fill="#999" fontSize="11" textAnchor="middle">
      {items.map(([x, y, t]) => (
        <text key={`${x} ${y}`} transform={`translate(${x - 4} ${y}) rotate(90)`}>{t}</text>
      ))}
    </g>
  );
}

function Origin() {
  return (
    <g>
      <circle r="6" fill="#999" fillOpacity=".4" />
      <circle r="3.500" fill="#000" />
      <g transform="translate(-9 -9)" stroke="#777">
        <circle r="6" fill="#ddd" />
        <circle r="4" />
        <circle r="2" />
      </g>
    </g>
  );
}

function Arrow({ x, y, turn }: { x: number; y: number; turn: number }) {
  return <path d="M0 0-8-3V3Z" fill="#111" transform={`translate(${x} ${y}) rotate(${turn})`} />;
}

function Handle({ x, y }: { x: number; y: number }) {
  return <circle cx={x} cy={y} r="3" fill="#fff" stroke="#888" />;
}

function Canvas({ x, y, children }: { x: number; y: number; children: ReactNode }) {
  return (
    <svg className="absolute inset-0 h-full w-full" fill="none" aria-hidden="true">
      <g transform={`translate(${x} ${y})`}>{children}</g>
    </svg>
  );
}

const emptyScene = (
  <Canvas x={440} y={190}>
    <Grid dx={22.8} dy={25.2} left={15} right={14} up={5} down={13} />
    <path d="M0-190V335" stroke="#8fe08f" strokeWidth="1.200" />
    <circle r="6" stroke="#bbb" strokeWidth="2" fill="#eee" />
    <AxisLabels items={[[8, -132, "50"], [107, 9, "50"], [222, 14, "100"]]} />
  </Canvas>
);

const circleScene = (
  <Canvas x={491} y={252}>
    <ellipse rx="184" ry="194" fill="#fff5e9" />
    <Grid dx={18.3} dy={19.4} left={27} right={28} up={14} down={15} />
    <AxisLabels items={[[-466, 15, "125"], [-374, 15, "100"], [-282, 10, "75"], [-98, 10, "25"], [8, -106, "25"], [8, -198, "50"]]} />
    <g stroke="#333">
      <ellipse rx="184" ry="194" />
      <ellipse rx="157" ry="165" />
      <ellipse rx="111" ry="116" />
      <path d="M0 0-173-62M0 0 173 62M0 0-142 67M0 0 168-81H206M-146-115-88-70" />
    </g>
    <Arrow x={-173} y={-62} turn={200} />
    <Arrow x={173} y={62} turn={20} />
    <Arrow x={-142} y={67} turn={155} />
    <Arrow x={142} y={-68} turn={-25} />
    <Arrow x={-146} y={-115} turn={218} />
    <Arrow x={-88} y={-70} turn={38} />
    <text x="168" y="-87" fontSize="12" fill="#444">Ø85.00</text>
    <text transform="translate(61 36) rotate(20)" fontSize="12" fill="#444">Ø100.00</text>
    <Origin />
  </Canvas>
);

const lineScene = (
  <Canvas x={462} y={219}>
    <ellipse rx="173" ry="167" fill="#fff5e9" />
    <Grid dx={17.2} dy={16.8} left={27} right={28} up={14} down={11} />
    <AxisLabels items={[[-438, 12, "125"], [-351, 12, "100"], [-265, 9, "75"], [-92, 9, "25"], [8, -91, "25"], [8, -171, "50"]]} />
    <g stroke="#4a76f0">
      <ellipse rx="173" ry="167" />
      <ellipse rx="147" ry="142" />
      <ellipse rx="135" ry="130" />
      <path d="M0 0 207-117M0 0 255-92" />
    </g>
    <path d="M0 0 271-54" stroke="#333" />
    <path d="M0 0H277" stroke="#333" strokeWidth="1.500" />
    <path d="M242-50 244-36M247-22V0" stroke="#333" />
    <Arrow x={242} y={-50} turn={-100} />
    <Arrow x={247} y={0} turn={90} />
    <Handle x={207} y={-117} />
    <Handle x={255} y={-92} />
    <Handle x={271} y={-54} />
    <Handle x={277} y={0} />
    <rect x="131" y="5" width="15" height="6" fill="#bbb" stroke="#888" />
    <Origin />
  </Canvas>
);

const menuScene = (
  <Canvas x={92} y={243}>
    <ellipse rx="358" ry="332" fill="#fff5e9" />
    <Grid dx={7.17} dy={6.62} left={14} right={130} up={37} down={25} />
    <g stroke="#4a76f0">
      <ellipse rx="358" ry="332" />
      <ellipse rx="305" ry="282" />
      <ellipse rx="279" ry="258" />
    </g>
    <g strokeDasharray="11 5" strokeWidth="1.200" stroke="#777">
      <path d="M0 0 491-71M0 0 570-23M0 0H574" />
      <path d="M0 0 552-44" stroke="#2378d8" strokeWidth="1.600" />
    </g>
    <path d="M451-48 454 0M495-38V0M512-20V0" stroke="#333" />
    <Arrow x={454} y={0} turn={90} />
    <Arrow x={495} y={0} turn={90} />
    <Arrow x={495} y={-38} turn={-90} />
    <Arrow x={512} y={0} turn={90} />
    <Arrow x={512} y={-20} turn={-90} />
    <g fill="#555" fontSize="11" textAnchor="middle">
      <text transform="translate(435 -57) rotate(90)">9.0°</text>
      <text transform="translate(482 -27) rotate(90)">5.0°</text>
      <text transform="translate(499 -12) rotate(90)">2.5°</text>
    </g>
    <Handle x={491} y={-71} />
    <Handle x={552} y={-44} />
    <Handle x={570} y={-23} />
    <Handle x={574} y={0} />
    <rect x="279" y="5" width="16" height="6" fill="#bbb" stroke="#888" />
    <path d="M-16 3V14H-3" stroke="#999" strokeWidth="3" />
    <path d="M-16 3V14H-3" stroke="#eee" />
    <Origin />
  </Canvas>
);

/* ---------- menus over the canvas ---------- */

function FileMenu() {
  const groups: [string, string?, boolean?][][] = [
    [["New Design"], ["New Drawing", "▶"], ["Open...", "Ctrl+O"], ["Recover Documents (3)"], ["Upload..."]],
    [["Save", "Ctrl+S"], ["Save as", "", true], ["Export..."]],
    [["3D Print"], ["Capture Image..."], ["Share", "▶"]],
    [["View Details on Web", "", true], ["View", "▶"]],
  ];
  return (
    <div role="menu" className="absolute top-0 left-[31px] z-10 flex w-[149px] flex-col divide-y-2 divide-[#a3a3a3] border border-[#8a8a8a] bg-white px-[3px] py-px shadow">
      {groups.map((group) => (
        <div key={group[0][0]}>
          {group.map(([name, hint, off]) => (
            <button
              key={name}
              role="menuitem"
              disabled={off}
              className={`flex h-[18px] w-full items-center justify-between pl-[15px] text-left whitespace-nowrap ${hint === "▶" ? "pr-1" : "pr-5"} ${off ? "text-[#999]" : "text-[#444]"} ${name === "New Design" ? "bg-[#d6d6d6]" : ""}`}
            >
              {name}
              {hint === "▶" ? <Pic box="0 0 4 8" className="h-2 w-1"><path d="M0 0 4 4 0 8Z" fill="#111" /></Pic> : <span>{hint}</span>}
            </button>
          ))}
        </div>
      ))}
    </div>
  );
}

function MarkingMenu() {
  const pill = "absolute flex h-4 items-center gap-2 rounded-xs border border-[#c4c4c4] bg-[#f3f3f3] whitespace-nowrap text-[#444] shadow-sm";
  const mini = (name: string) => <Pic box="0 0 24 26" className="h-3 w-3">{toolPics[name]}</Pic>;
  const items: [string, string, ReactNode][][] = [
    [
      ["Create Selection Set", "", <g key="p"><path d="M4 3H11V9H4Z" fill="#fff" stroke="#3f8a44" /><path d="M1 5H8V11H1Z" fill="#5fae57" stroke="#37713a" /><circle cx="10" cy="2" r="1.500" stroke="#ef7d22" /></g>],
      ["Extrude", "", <g key="p"><path d="M1 3 3 1H8V9L6 11H1Z" fill="#f2a878" stroke="#7a5a48" /><path d="M11 11V1" stroke="#444" /></g>],
    ],
    [
      ["Sketch Dimension", "d", <path key="p" d="M1 1V11M11 1V11M1 5H11M3 3.500 1 5 3 6.500M9 3.500 11 5 9 6.500" stroke="#444" />],
      ["Normal/Construction", "x", <g key="p"><path d="M11 2 1 6 11 10" stroke="#333" /><path d="M8 1V11M7 6H12" stroke="#8a6a2a" /></g>],
    ],
    [
      ["Fix/UnFix", "", <path key="p" d="M2 5H10V11H2ZM4 5V3Q6 0 8 3V5" fill="#f6c9a8" stroke="#b0532a" strokeWidth="1.300" />],
      ["Horizontal/Vertical", "", <g key="p"><path d="M5.500 1V8" stroke="#e04b4b" strokeWidth="3" strokeDasharray="2 1" /><path d="M7 1V8H11" stroke="#888" /><path d="M3 10.500H11" stroke="#e04b4b" strokeWidth="2" strokeDasharray="2 1" /></g>],
      ["Delete Coincident", "", <g key="p"><path d="M4 3 11 10M11 3 4 10" stroke="#d01818" strokeWidth="2.200" /><path d="M1 1V11" stroke="#d01818" strokeDasharray="2 1" /></g>],
    ],
    [["Copy", "Ctrl+C", null]],
    [["Find in Browser", "", null], ["Find in Window", "", null]],
  ];
  return (
    <div className="z-10">
      <button className={`${pill} top-[157px] left-[446px] w-[142px] pl-[7px]`}><NormalConstruction /> Repeat Normal/Construction</button>
      <button className={`${pill} top-[179px] left-[442px] w-[55px] gap-1 pl-[5px]`}>Delete {mini("remove")}</button>
      <button className={`${pill} top-[179px] left-[536px] w-[70px] pl-1`}>{mini("press")} Press Pull</button>
      <button className={`${pill} top-[200px] left-[426px] w-[55px] pl-2`}>Undo <UndoArrow /></button>
      <button className={`${pill} top-[200px] left-[551px] w-[55px] pl-[5px] opacity-40`}><UndoArrow flip faint /> Redo</button>
      <button className={`${pill} top-[220px] left-[418px] w-[79px] pl-2`}>
        Move/Copy
        <Pic box="0 0 13 13" className="h-3 w-[13px]"><path d="M6.500 1V5M6.500 8V12M1 6.500H5M8 6.500H12M5 3 6.500 1 8 3M5 10 6.500 12 8 10M3 5 1 6.500 3 8M10 5 12 6.500 10 8" stroke="#333" strokeWidth="1.300" /></Pic>
      </button>
      <button className={`${pill} top-[220px] left-[536px] w-[47px] pl-1`}>{mini("hole")} Hole</button>
      <button className={`${pill} top-[243px] left-[489px] w-[55px] pl-2`}>
        Sketch <Pic box="0 0 6 5" className="h-[5px] w-[6px]"><path d="M0 0H6L3 5Z" fill="#333" /></Pic>
      </button>
      <div role="menu" className="absolute top-[265px] left-[457px] flex w-[119px] flex-col divide-y divide-[#cfcfcf] border border-[#d5d5d5] bg-white shadow">
        {items.map((group) => (
          <div key={group[0][0]} className="pb-px">
            {group.map(([name, key, pic]) => (
              <button
                key={name}
                role="menuitem"
                className={`flex h-[13px] w-full items-center justify-between pr-[3px] pl-[2px] whitespace-nowrap ${key === "x" ? "bg-[#0696d7] text-white" : "text-[#444]"}`}
              >
                <span className="flex items-center gap-[6px]">
                  <Pic box="0 0 12 12" className="h-3 w-3">{pic}</Pic>
                  {name}
                </span>
                <span className={key === "x" ? "text-[#8fd0ef]" : "text-[#aaa]"}>{key}</span>
              </button>
            ))}
          </div>
        ))}
      </div>
    </div>
  );
}

/* ---------- application window ---------- */

interface WindowProps extends Shape {
  id: string;
  strong?: boolean;
  heights: { title: string; tabs: string; quick: string; view: string; time: string };
  scene: ReactNode;
  over?: ReactNode;
  fileOpen?: boolean;
  redo?: boolean;
  selectOn?: boolean;
  active?: boolean;
  cube: string;
  paletteBottom: string;
  task: Omit<TaskProps, "broad">;
}

function FusionWindow(p: WindowProps) {
  const shape = { broad: p.broad, tall: p.tall };
  return (
    <section className="min-w-0 font-['Liberation_Sans',sans-serif] text-[8px]">
      <TitleBar strong={p.strong} height={p.heights.title} />
      <TabStrip {...shape} height={p.heights.tabs} />
      <QuickBar broad={p.broad} height={p.heights.quick} fileOpen={p.fileOpen} redo={p.redo} />
      <main className={`relative flex flex-col bg-white pt-1 pl-[3px] ${p.heights.view}`}>
        {p.scene}
        <ViewCube tall={p.tall} place={p.cube} />
        <Ribbon {...shape} selectOn={p.selectOn} />
        <div className="relative flex flex-1 text-[#444]">
          <div className="flex flex-col pb-1">
            <Browser {...shape} marked={p.active} />
            <Comments {...shape} />
          </div>
          <div className="flex items-end pb-1">
            <NavBar {...shape} />
          </div>
          <Palette {...shape} id={p.id} active={p.active} bottom={p.paletteBottom} />
        </div>
        {p.over}
      </main>
      <Timeline height={p.heights.time} />
      <TaskBar broad={p.broad} {...p.task} />
    </section>
  );
}

function DimensionBox({ place, text, picked, unit }: { place: string; text: string; picked?: boolean; unit: string }) {
  return (
    <div className={`absolute flex items-center gap-[5px] bg-[#f0f0f0] pl-[3px] ${place}`}>
      <span className="h-full w-1 border-x border-dotted border-[#ccc]" />
      <span className={`ml-[7px] flex justify-center border border-[#d0d0d0] bg-white ${picked ? "w-[55px] py-px" : "w-[65px]"}`}>
        <input aria-label={unit} defaultValue={text} className={`text-center ${picked ? "h-[11px] w-[37px] bg-[#0078d7] text-white" : "w-full text-[#555]"}`} />
      </span>
      <Caret />
    </div>
  );
}

const tallHeights = { title: "h-[22px]", tabs: "h-[32px]", quick: "h-[22px]", view: "h-[449px]", time: "h-[41px]" };
const note = "absolute font-['DejaVu_Sans',sans-serif] text-[24px] text-[#f00] ring-[#f00] ring-inset whitespace-nowrap";

export default function App() {
  return (
    <div className="relative h-screen overflow-hidden bg-white pr-1 pl-[2px] leading-none">
      <SharedDefs />
      <div className="grid grid-cols-[954fr_1009fr] gap-[2px]">
        <FusionWindow
          id="new"
          broad={false}
          tall
          heights={tallHeights}
          scene={emptyScene}
          fileOpen
          selectOn
          cube="right-[18px] top-[23px]"
          paletteBottom="mb-1 mr-px"
          over={<FileMenu />}
          task={{ time: "22:02", count: "1", height: "h-[33px]", tone: "bg-[#050c16]", slot: "w-[33px]", search: "w-[257px]", prompt: true }}
        />
        <FusionWindow
          id="circle"
          broad
          tall
          heights={tallHeights}
          scene={circleScene}
          redo
          cube="right-[21px] top-[23px]"
          paletteBottom="mb-1 mr-[2px]"
          over={
            <>
              <DimensionBox place="left-[343px] top-[152px] h-[17px] w-[84px]" text="20.00 mm" picked unit="Diameter" />
              <span className="absolute top-[186px] left-[342px] rounded-full bg-[#4a4a4a] px-[10px] font-['Open_Sans',sans-serif] text-[9px] leading-[17px] font-bold whitespace-nowrap text-white">
                d3 : 20.00 mm
              </span>
            </>
          }
          task={{ time: "22:12", count: "2", height: "h-[33px]", tone: "bg-[#2a2a2a]", slot: "w-[37px]", search: "w-[272px]" }}
        />
      </div>
      <div className="grid grid-cols-[949fr_1016fr]">
        <FusionWindow
          id="line"
          broad={false}
          tall={false}
          heights={{ title: "h-[17px]", tabs: "h-[27px]", quick: "h-[20px]", view: "h-[390px]", time: "h-[35px]" }}
          scene={lineScene}
          cube="right-[20px] top-[20px]"
          paletteBottom="mb-[5px] mr-[2px]"
          over={<DimensionBox place="left-[674px] top-[183px] h-[15px] w-[92px]" text="2.5" unit="Angle" />}
          task={{ time: "22:15", count: "2", height: "h-[29px]", tone: "bg-[#2d2f31]", slot: "w-[35px]", search: "w-[256px]" }}
        />
        <FusionWindow
          id="menu"
          broad
          tall={false}
          strong
          heights={{ title: "h-[17px]", tabs: "h-[28px]", quick: "h-[20px]", view: "h-[396px]", time: "h-[36px]" }}
          scene={menuScene}
          selectOn
          active
          cube="right-[22px] top-[20px]"
          paletteBottom="mb-1 mr-[3px]"
          over={<MarkingMenu />}
          task={{ time: "22:16", count: "2", height: "h-[31px]", tone: "bg-[#2d2d2d]", slot: "w-[38px]", search: "w-[272px]" }}
        />
      </div>

      <div className="pointer-events-none absolute inset-0 z-20">
        <svg className="absolute inset-0 h-full w-full" fill="none" stroke="#f00" aria-hidden="true">
          <rect x="31" y="73" width="154" height="26" rx="13" strokeWidth="1.500" strokeDasharray="7 3" />
          <path d="M194 144 152 100M153 107 152 100 161 101" strokeWidth="1.300" />
          <path d="M1188 257 1301 205M1267 198 1301 205 1294 234" strokeWidth="1.800" />
          <path d="M629 812 640 786M628 792 640 786 645 801" strokeWidth="2" />
          <path d="M1145 756 1403 974M1403 951V974L1372 976" strokeWidth="2" />
        </svg>
        <p className={`top-[145px] left-[186px] w-[274px] rounded-full pl-1 leading-[29px] ring-1 ${note}`}>1. Select new design</p>
        <p className={`top-[261px] left-[356px] w-[942px] rounded-2xl pt-px pb-[3px] pl-4 leading-[30px] ring-3 ${note}`}>
          2. Press 'c' for circle and construct 3 concentric circles of diameter 100mm,
          <br />
          85mm,78mm as described in gear diagram above or draw 3 random circles
          <br />
          change to required size using command 'd' for dimension
        </p>
        <p className={`top-[784px] left-[125px] w-[504px] rounded-2xl pb-[3px] pl-3 leading-[52px] ring-2 ${note}`}>
          3. Press 'L' for line and construct 3 lines
        </p>
        <p className={`top-[695px] left-[956px] w-[969px] rounded-2xl pb-[2px] pl-4 leading-[58px] ring-2 ${note}`}>
          4. Select the lines and right click and select them as normal construction lines
        </p>
      </div>
    </div>
  );
}
